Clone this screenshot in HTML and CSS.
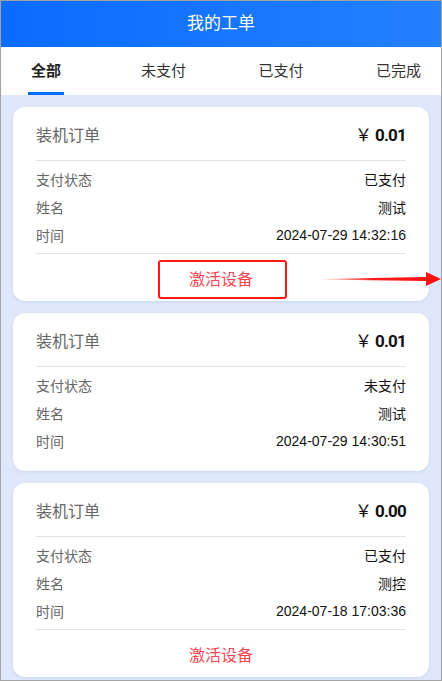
FILE: index.html
```html
<!DOCTYPE html>
<html lang="zh-CN">
<head>
<meta charset="UTF-8">
<meta name="viewport" content="width=device-width, initial-scale=1.0">
<title>我的工单</title>
<link rel="stylesheet" href="styles.css">
</head>
<body>

<div class="page">
  <div class="header">我的工单</div>

  <div class="tabs">
    <div class="tab active">全部</div>
    <div class="tab">未支付</div>
    <div class="tab">已支付</div>
    <div class="tab">已完成</div>
  </div>

  <div class="list">
    <div class="card">
      <div class="card-head">
        <span class="card-title">装机订单</span>
        <span class="price"><span class="yen">￥</span>0.01</span>
      </div>
      <div class="card-body">
        <div class="row"><span class="label">支付状态</span><span class="value">已支付</span></div>
        <div class="row"><span class="label">姓名</span><span class="value">测试</span></div>
        <div class="row"><span class="label">时间</span><span class="value">2024-07-29 14:32:16</span></div>
      </div>
      <div class="card-foot">
        <span class="action">激活设备</span>
        <div class="mark-box"></div>
      </div>
    </div>

    <div class="card no-foot">
      <div class="card-head">
        <span class="card-title">装机订单</span>
        <span class="price"><span class="yen">￥</span>0.01</span>
      </div>
      <div class="card-body">
        <div class="row"><span class="label">支付状态</span><span class="value">未支付</span></div>
        <div class="row"><span class="label">姓名</span><span class="value">测试</span></div>
        <div class="row"><span class="label">时间</span><span class="value">2024-07-29 14:30:51</span></div>
      </div>
    </div>

    <div class="card">
      <div class="card-head">
        <span class="card-title">装机订单</span>
        <span class="price"><span class="yen">￥</span>0.00</span>
      </div>
      <div class="card-body">
        <div class="row"><span class="label">支付状态</span><span class="value">已支付</span></div>
        <div class="row"><span class="label">姓名</span><span class="value">测控</span></div>
        <div class="row"><span class="label">时间</span><span class="value">2024-07-18 17:03:36</span></div>
      </div>
      <div class="card-foot">
        <span class="action">激活设备</span>
      </div>
    </div>
  </div>

  <!-- annotation arrow -->
  <svg class="mark-arrow" width="124" height="16" viewBox="0 0 124 16">
    <defs>
      <linearGradient id="arrowFade" x1="0" y1="0" x2="1" y2="0">
        <stop offset="0" stop-color="#ff1a1a" stop-opacity="0"/>
        <stop offset="0.45" stop-color="#ff1a1a" stop-opacity="1"/>
        <stop offset="1" stop-color="#ff1010"/>
      </linearGradient>
    </defs>
    <polygon points="0,8 108,6 108,1 123,8 108,15 108,10 0,8.6" fill="url(#arrowFade)"/>
  </svg>
</div>

</body>
</html>
```

FILE: styles.css
```css
* {
  box-sizing: border-box;
}

body {
  margin: 0;
  padding: 0;
  font-family: "Liberation Sans", "Noto Sans CJK SC", sans-serif;
  background: #ffffff;
}

.page {
  position: relative;
  width: 442px;
  height: 681px;
  border: 1px solid #a3a3a3;
  background-color: #dfe8fa;
  overflow: hidden;
}

.header {
  height: 46px;
  line-height: 46px;
  text-align: center;
  color: #ffffff;
  font-size: 17px;
  background: linear-gradient(90deg, #0a6bff 0%, #2480ff 100%);
}

.tabs {
  display: flex;
  gap: 27.5px;
  height: 48px;
  background-color: #ffffff;
}

.tab {
  position: relative;
  width: 90px;
  flex-shrink: 0;
  text-align: center;
  line-height: 48px;
  font-size: 15px;
  color: #333333;
}

.tab.active {
  font-weight: bold;
  color: #222222;
}

.tab.active::after {
  content: "";
  position: absolute;
  left: 27px;
  bottom: 0;
  width: 36px;
  height: 3px;
  background-color: #0a6bff;
}

.list {
  display: flex;
  flex-direction: column;
  gap: 12px;
  padding: 12px;
}

.card {
  background-color: #ffffff;
  border-radius: 12px;
  padding: 0 23px;
  box-shadow: 0 1px 3px rgba(60, 90, 150, 0.12);
}

.card.no-foot {
  padding-bottom: 12px;
}

.card-head {
  display: flex;
  justify-content: space-between;
  align-items: center;
  height: 54px;
  border-bottom: 1px solid #e3e3e3;
}

.card-title {
  font-size: 16px;
  color: #666666;
}

.price {
  font-family: Roboto, "Liberation Sans", sans-serif;
  font-weight: bold;
  font-size: 17px;
  letter-spacing: -0.8px;
  color: #111111;
}

.yen {
  font-family: "Noto Sans CJK SC", sans-serif;
  font-weight: normal;
  font-size: 17px;
  letter-spacing: 0;
  margin-right: 3px;
}

.card-body {
  padding: 4px 0;
}

.row {
  display: flex;
  justify-content: space-between;
  align-items: center;
  height: 28px;
  font-size: 14px;
}

.label {
  color: #666666;
}

.value {
  color: #111111;
}

.card-foot {
  position: relative;
  display: flex;
  justify-content: center;
  align-items: center;
  height: 48px;
  border-top: 1px solid #e3e3e3;
}

.action {
  font-size: 16px;
  color: #f5454f;
}

.mark-box {
  position: absolute;
  top: 6px;
  left: calc(50% - 63px);
  width: 129px;
  height: 39px;
  border: 2.5px solid #ff1a1a;
  border-radius: 3px;
}

.mark-arrow {
  position: absolute;
  left: 317px;
  top: 270px;
}
```
